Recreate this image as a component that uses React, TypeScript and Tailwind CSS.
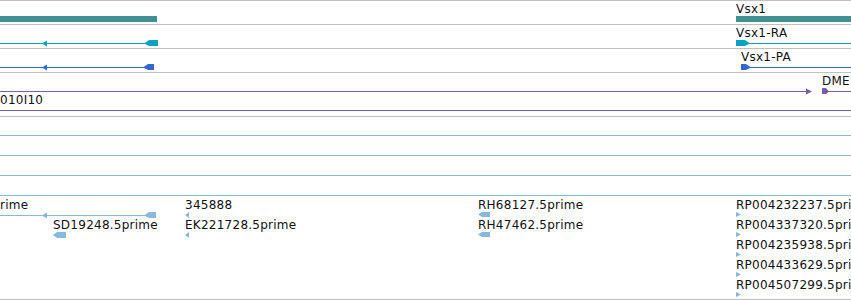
import React from "react";

type Shape =
  | { kind: "rect"; x: number; y: number; w: number; h: number; c: string }
  | { kind: "poly"; p: string; c: string };

type Label = { text: string; cls: string };

const TEAL = "#418f90";
const CYAN = "#0aa2c2";
const BLUE = "#3468d0";
const PURPLE = "#7a5ca9";
const LBLUE = "#88b8dc";

function Track({
  top,
  height,
  shapes,
  labels,
  className,
}: {
  top: number;
  height: number;
  shapes: Shape[];
  labels: Label[];
  className: string;
}) {
  return (
    <div className={className}>
      <svg
        className="absolute left-0 top-0"
        width={851}
        height={height}
        viewBox={`0 ${top + 1} 851 ${height}`}
        shapeRendering="crispEdges"
      >
        {shapes.map((s, i) =>
          s.kind === "rect" ? (
            <rect key={i} x={s.x} y={s.y} width={s.w} height={s.h} fill={s.c} />
          ) : (
            <polygon key={i} points={s.p} fill={s.c} shapeRendering="geometricPrecision" />
          )
        )}
      </svg>
      {labels.map((l, i) => (
        <div
          key={i}
          className={`absolute whitespace-nowrap text-[12px] leading-[12px] tracking-[0.25px] text-[#111] ${l.cls}`}
        >
          {l.text}
        </div>
      ))}
    </div>
  );
}

export default function App() {
  const rpTops = [
    "top-[82px]",
    "top-[102px]",
    "top-[122px]",
    "top-[142px]",
    "top-[162px]",
  ];
  const rpTexts = [
    "RP004232237.5prime",
    "RP004337320.5prime",
    "RP004235938.5prime",
    "RP004433629.5prime",
    "RP004507299.5prime",
  ];
  const rpArrows: Shape[] = [0, 1, 2, 3, 4].map((i) => ({
    kind: "poly",
    p: `736,${212 + i * 20} 741,${214.5 + i * 20} 736,${217 + i * 20}`,
    c: LBLUE,
  }));

  return (
    <div className="w-[851px] h-[300px] overflow-hidden bg-white font-['DejaVu_Sans',sans-serif] flex flex-col">
      {/* Gene track */}
      <Track
        className="relative h-[24px] shrink-0 border-t border-[#c0c0c0]"
        top={0}
        height={23}
        shapes={[
          { kind: "rect", x: 0, y: 16, w: 157, h: 6, c: TEAL },
          { kind: "rect", x: 736, y: 16, w: 115, h: 6, c: TEAL },
        ]}
        labels={[{ text: "Vsx1", cls: "left-[736px] top-[2px]" }]}
      />
      {/* Transcript RA */}
      <Track
        className="relative h-[24px] shrink-0 border-t border-[#c0c0c0]"
        top={24}
        height={23}
        shapes={[
          { kind: "rect", x: 0, y: 43, w: 150, h: 1, c: CYAN },
          { kind: "poly", p: "42,43.5 47,40.5 47,46.5", c: CYAN },
          { kind: "poly", p: "144,43.5 149,40 158,40 158,46 149,46", c: CYAN },
          { kind: "poly", p: "736,40 745,40 750,43.5 745,46 736,46", c: CYAN },
          { kind: "rect", x: 745, y: 43, w: 106, h: 1, c: CYAN },
        ]}
        labels={[{ text: "Vsx1-RA", cls: "left-[736px] top-[2px]" }]}
      />
      {/* Transcript PA */}
      <Track
        className="relative h-[24px] shrink-0 border-t border-[#c0c0c0]"
        top={48}
        height={23}
        shapes={[
          { kind: "rect", x: 0, y: 67, w: 148, h: 1, c: BLUE },
          { kind: "poly", p: "42,67.5 47,64.5 47,70.5", c: BLUE },
          { kind: "poly", p: "143,67.5 148,64 154,64 154,70 148,70", c: BLUE },
          { kind: "poly", p: "741,64 746,64 751,67.5 746,70 741,70", c: BLUE },
          { kind: "rect", x: 746, y: 67, w: 105, h: 1, c: BLUE },
        ]}
        labels={[{ text: "Vsx1-PA", cls: "left-[741px] top-[2px]" }]}
      />
      {/* BAC / clone track */}
      <Track
        className="relative h-[44px] shrink-0 border-t border-[#c0c0c0]"
        top={72}
        height={43}
        shapes={[
          { kind: "rect", x: 0, y: 91, w: 807, h: 1, c: PURPLE },
          { kind: "poly", p: "806,88.5 812,91.5 806,94.5", c: PURPLE },
          { kind: "poly", p: "822,88 826,88 829,91.5 826,94 822,94", c: PURPLE },
          { kind: "rect", x: 826, y: 91, w: 25, h: 1, c: PURPLE },
          { kind: "rect", x: 0, y: 110, w: 851, h: 1, c: PURPLE },
        ]}
        labels={[
          { text: "DME1", cls: "left-[822px] top-[2px]" },
          { text: "010I10", cls: "left-0 top-[21px]" },
        ]}
      />
      {/* EST track */}
      <Track
        className="relative h-[184px] shrink-0 border-t border-b border-[#c0c0c0]"
        top={116}
        height={182}
        shapes={[
          { kind: "rect", x: 0, y: 135, w: 851, h: 1, c: LBLUE },
          { kind: "rect", x: 0, y: 155, w: 851, h: 1, c: LBLUE },
          { kind: "rect", x: 0, y: 175, w: 851, h: 1, c: LBLUE },
          { kind: "rect", x: 0, y: 195, w: 851, h: 1, c: LBLUE },
          { kind: "rect", x: 0, y: 215, w: 150, h: 1, c: LBLUE },
          { kind: "poly", p: "42,215.5 47,212.5 47,218.5", c: LBLUE },
          { kind: "poly", p: "144,215.5 149,212 156,212 156,218 149,218", c: LBLUE },
          { kind: "poly", p: "53,235 57,232 66,232 66,238 57,238", c: LBLUE },
          { kind: "poly", p: "185,215 189,212 189,218", c: LBLUE },
          { kind: "poly", p: "185,235 189,232 189,238", c: LBLUE },
          { kind: "poly", p: "478,214.5 482,212 490,212 490,217 482,217", c: LBLUE },
          { kind: "poly", p: "478,234.5 482,232 490,232 490,237 482,237", c: LBLUE },
          ...rpArrows,
        ]}
        labels={[
          { text: "rime", cls: "left-0 top-[82px]" },
          { text: "SD19248.5prime", cls: "left-[53px] top-[102px]" },
          { text: "345888", cls: "left-[185px] top-[82px]" },
          { text: "EK221728.5prime", cls: "left-[185px] top-[102px]" },
          { text: "RH68127.5prime", cls: "left-[478px] top-[82px]" },
          { text: "RH47462.5prime", cls: "left-[478px] top-[102px]" },
          ...rpTexts.map((t, i) => ({ text: t, cls: `left-[736px] ${rpTops[i]}` })),
        ]}
      />
    </div>
  );
}
